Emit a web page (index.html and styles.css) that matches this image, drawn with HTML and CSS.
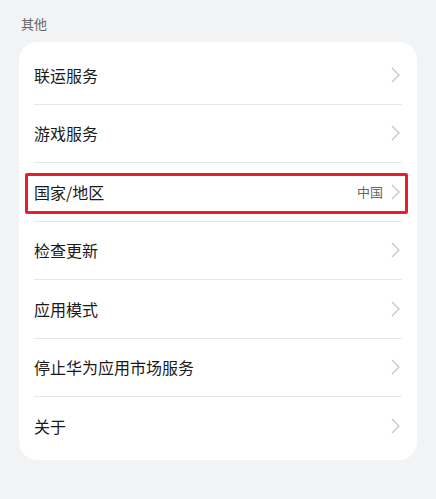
FILE: index.html
```html
<!DOCTYPE html>
<html lang="zh-CN">
<head>
<meta charset="utf-8">
<link rel="stylesheet" href="styles.css">
</head>
<body>
<div class="page">
  <div class="section-title">其他</div>
  <div class="card">
    <div class="row"><span class="label">联运服务</span><span class="right"><svg class="chev" viewBox="0 0 9 16"><polyline points="1,1 8,8 1,15"/></svg></span></div>
    <div class="row"><span class="label">游戏服务</span><span class="right"><svg class="chev" viewBox="0 0 9 16"><polyline points="1,1 8,8 1,15"/></svg></span></div>
    <div class="row highlighted"><span class="label">国家/地区</span><span class="right"><span class="value">中国</span><svg class="chev" viewBox="0 0 9 16"><polyline points="1,1 8,8 1,15"/></svg></span><span class="mark"></span></div>
    <div class="row"><span class="label">检查更新</span><span class="right"><svg class="chev" viewBox="0 0 9 16"><polyline points="1,1 8,8 1,15"/></svg></span></div>
    <div class="row"><span class="label">应用模式</span><span class="right"><svg class="chev" viewBox="0 0 9 16"><polyline points="1,1 8,8 1,15"/></svg></span></div>
    <div class="row"><span class="label">停止华为应用市场服务</span><span class="right"><svg class="chev" viewBox="0 0 9 16"><polyline points="1,1 8,8 1,15"/></svg></span></div>
    <div class="row"><span class="label">关于</span><span class="right"><svg class="chev" viewBox="0 0 9 16"><polyline points="1,1 8,8 1,15"/></svg></span></div>
  </div>
</div>
</body>
</html>
```
FILE: styles.css
```css
html, body {
  margin: 0;
  padding: 0;
  background: #f1f3f5;
  font-family: "Noto Sans CJK SC", "Noto Sans", sans-serif;
}
.page {
  padding: 0 19px;
}
.section-title {
  padding: 15px 0 0 2px;
  line-height: 17px;
  font-size: 13px;
  color: #666;
  margin-bottom: 10px;
}
.card {
  background: #fff;
  border-radius: 18px;
  padding: 4px 15px;
}
.row {
  position: relative;
  box-sizing: border-box;
  height: 58.5px;
  display: flex;
  align-items: center;
  justify-content: space-between;
  border-bottom: 1px solid #e6e7e9;
}
.row:last-child {
  border-bottom: none;
}
.label {
  font-size: 16px;
  color: #1a1a1a;
}
.right {
  display: flex;
  align-items: center;
  gap: 8px;
  padding-right: 2px;
}
.value {
  font-size: 13px;
  color: #666;
}
.chev {
  width: 9px;
  height: 16px;
  fill: none;
  stroke: #c6c6c6;
  stroke-width: 1.3;
}
.mark {
  position: absolute;
  left: -9px;
  right: -6px;
  top: 9.5px;
  bottom: 6.5px;
  border: 3px solid #e5202b;
  border-radius: 2px;
}
```
